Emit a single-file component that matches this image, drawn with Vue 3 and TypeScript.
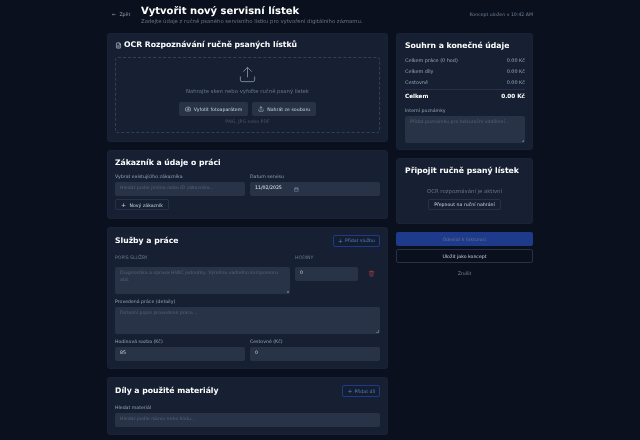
<template>
  <div class="page">
    <header class="page-header">
      <a class="back"><span class="arrow">←</span> Zpět</a>
      <div class="heading">
        <h1>Vytvořit nový servisní lístek</h1>
        <p>Zadejte údaje z ručně psaného servisního lístku pro vytvoření digitálního záznamu.</p>
      </div>
      <span class="saved">Koncept uložen v 10:42 AM</span>
    </header>

    <div class="layout">
      <main class="col">
        <section class="card ocr">
          <h2 class="ocr-title">
            <svg viewBox="0 0 24 24" class="doc"><path d="M14 3H6a1 1 0 0 0-1 1v16a1 1 0 0 0 1 1h12a1 1 0 0 0 1-1V8zM14 3v5h5M9 13h6M9 17h6" /></svg>
            OCR Rozpoznávání ručně psaných lístků
          </h2>
          <div class="dropzone">
            <svg viewBox="0 0 24 24" class="upload"><path d="M21 15v4a2 2 0 0 1-2 2H5a2 2 0 0 1-2-2v-4M17 8l-5-5-5 5M12 3v12" /></svg>
            <p class="drop-text">Nahrajte sken nebo vyfoťte ručně psaný lístek</p>
            <div class="drop-actions">
              <button class="btn-soft">
                <svg viewBox="0 0 24 24"><path d="M14.5 4h-5L7 7H4a2 2 0 0 0-2 2v9a2 2 0 0 0 2 2h16a2 2 0 0 0 2-2V9a2 2 0 0 0-2-2h-3z" /><circle cx="12" cy="13" r="3" /></svg>
                Vyfotit fotoaparátem
              </button>
              <button class="btn-soft">
                <svg viewBox="0 0 24 24"><path d="M21 15v4a2 2 0 0 1-2 2H5a2 2 0 0 1-2-2v-4M17 8l-5-5-5 5M12 3v12" /></svg>
                Nahrát ze souboru
              </button>
            </div>
            <p class="drop-note">PNG, JPG nebo PDF</p>
          </div>
        </section>

        <section class="card customer">
          <h2>Zákazník a údaje o práci</h2>
          <div class="two">
            <label class="field">
              <span>Vybrat existujícího zákazníka</span>
              <div class="input placeholder">Hledat podle jména nebo ID zákazníka...</div>
            </label>
            <label class="field">
              <span>Datum servisu</span>
              <div class="input date">
                11/02/2025
                <svg viewBox="0 0 24 24"><path d="M4 5h16v16H4zM4 10h16M8 3v4M16 3v4" /></svg>
              </div>
            </label>
          </div>
          <button class="btn-outline new-customer"><span class="plus">+</span> Nový zákazník</button>
        </section>

        <section class="card services">
          <div class="card-head">
            <h2>Služby a práce</h2>
            <button class="btn-add"><span class="plus">+</span> Přidat službu</button>
          </div>
          <div class="service-row">
            <div class="service-desc">
              <span class="caps">POPIS SLUŽBY</span>
              <div class="textarea placeholder">Diagnostika a oprava HVAC jednotky, Výměna vadného kompresoru atd.</div>
            </div>
            <div class="service-hours">
              <span class="caps">HODINY</span>
              <div class="input">0</div>
            </div>
            <svg viewBox="0 0 24 24" class="trash"><path d="M4 6h16M9 6V4h6v2M6 6l1 15h10l1-15zM10 10v8M14 10v8" /></svg>
          </div>
          <label class="field work">
            <span>Provedená práce (detaily)</span>
            <div class="textarea placeholder">Detailní popis provedené práce...</div>
          </label>
          <div class="two">
            <label class="field">
              <span>Hodinová sazba (Kč)</span>
              <div class="input">85</div>
            </label>
            <label class="field">
              <span>Cestovné (Kč)</span>
              <div class="input">0</div>
            </label>
          </div>
        </section>

        <section class="card parts">
          <div class="card-head">
            <h2>Díly a použité materiály</h2>
            <button class="btn-add"><span class="plus">+</span> Přidat díl</button>
          </div>
          <label class="field">
            <span>Hledat materiál</span>
            <div class="input placeholder">Hledat podle názvu nebo kódu...</div>
          </label>
        </section>
      </main>

      <aside class="col">
        <section class="card summary">
          <h2>Souhrn a konečné údaje</h2>
          <div v-for="row in rows" :key="row.label" class="sum-row">
            <span>{{ row.label }}</span>
            <span>{{ row.value }}</span>
          </div>
          <div class="sum-total">
            <span>Celkem</span>
            <span>0.00 Kč</span>
          </div>
          <label class="field">
            <span>Interní poznámky</span>
            <div class="textarea placeholder">Přidat poznámku pro fakturační oddělení...</div>
          </label>
        </section>

        <section class="card attach">
          <h2>Připojit ručně psaný lístek</h2>
          <p>OCR rozpoznávání je aktivní</p>
          <button class="btn-outline">Přepnout na ruční nahrání</button>
        </section>

        <div class="actions">
          <button class="btn-primary">Odeslat k fakturaci</button>
          <button class="btn-draft">Uložit jako koncept</button>
          <button class="btn-cancel">Zrušit</button>
        </div>
      </aside>
    </div>
  </div>
</template>

<script setup lang="ts">
interface SummaryRow {
  label: string;
  value: string;
}

const rows: SummaryRow[] = [
  { label: 'Celkem práce (0 hod)', value: '0.00 Kč' },
  { label: 'Celkem díly', value: '0.00 Kč' },
  { label: 'Cestovné', value: '0.00 Kč' },
];
</script>

<style>
html,
body {
  margin: 0;
  background: #0a101e;
  overflow: hidden;
}
</style>

<style scoped>
.page {
  width: 640px;
  height: 440px;
  box-sizing: border-box;
  padding: 0 107px;
  overflow: hidden;
  background: #0a101e;
  color: #e2e8f0;
  font-family: "DejaVu Sans", sans-serif;
  font-size: 4.67px;
  text-rendering: geometricPrecision;
  filter: blur(0.35px);
}

h1,
h2,
p {
  margin: 0;
}

svg {
  fill: none;
  stroke: currentColor;
  stroke-width: 2;
  stroke-linecap: round;
  stroke-linejoin: round;
}

button {
  font-family: inherit;
  cursor: pointer;
}

/* header */
.page-header {
  height: 30px;
  margin-bottom: 3px;
  display: flex;
  align-items: center;
  padding-left: 5px;
  box-sizing: border-box;
}

.back {
  width: 29px;
  font-size: 4.67px;
  color: #94a3b8;
}

.arrow {
  margin-right: 2px;
}

.heading {
  flex: 1;
  padding-top: 1px;
}

.heading h1 {
  font-size: 10px;
  line-height: 12px;
  font-weight: 700;
  color: #fff;
}

.heading p {
  font-size: 5.33px;
  line-height: 8px;
  color: #64748b;
}

.saved {
  font-size: 4.67px;
  color: #718096;
}

/* columns */
.layout {
  display: grid;
  grid-template-columns: 281px 137px;
  gap: 8px;
  align-items: start;
}

.col {
  display: flex;
  flex-direction: column;
  gap: 8px;
}

.card {
  box-sizing: border-box;
  background: #172033;
  border: 1px solid #1a2336;
  border-radius: 3px;
  padding: 7px;
}

.card h2 {
  font-size: 7.7px;
  line-height: 12px;
  font-weight: 700;
  color: #fff;
}

.card-head {
  display: flex;
  align-items: center;
  justify-content: space-between;
  height: 12px;
}

/* form bits */
.field {
  display: flex;
  flex-direction: column;
}

.field > span {
  font-size: 4.67px;
  line-height: 7px;
  margin-bottom: 1px;
  color: #94a3b8;
}

.caps {
  display: block;
  font-size: 4.67px;
  line-height: 7px;
  color: #64748b;
}

.input,
.textarea {
  box-sizing: border-box;
  background: #283347;
  border-radius: 2px;
  padding: 0 5px;
  font-size: 4.67px;
  color: #cbd5e1;
}

.input {
  height: 14px;
  line-height: 14px;
}

.textarea {
  position: relative;
  height: 27px;
  padding-top: 3px;
  line-height: 7px;
}

.textarea::after {
  content: "";
  position: absolute;
  right: 1px;
  bottom: 1px;
  width: 3px;
  height: 3px;
  background: linear-gradient(135deg, transparent 50%, #5d6778 50%);
}

.placeholder {
  color: #566176;
}

.two {
  display: grid;
  grid-template-columns: 1fr 1fr;
  gap: 5px;
}

.plus {
  margin-right: 2px;
  font-size: 6px;
  line-height: 1;
}

.btn-outline {
  height: 11px;
  padding: 0 5px;
  background: #172033;
  border: 1px solid #263246;
  border-radius: 2px;
  color: #cbd5e1;
  font-size: 4.67px;
}

.btn-add {
  height: 12px;
  padding: 0 4px;
  display: flex;
  align-items: center;
  background: #151e30;
  border: 1px solid #1e3a8a;
  border-radius: 2px;
  color: #4f7fc4;
  font-size: 4.67px;
}

/* ocr card */
.ocr {
  height: 109px;
  padding-top: 5px;
}

.ocr-title {
  display: flex;
  align-items: center;
  gap: 2px;
  margin-bottom: 6px;
}

.doc {
  width: 7px;
  height: 7px;
  color: #cbd5e1;
}

.dropzone {
  box-sizing: border-box;
  height: 76px;
  display: flex;
  flex-direction: column;
  align-items: center;
  border: 1px dashed #343f52;
  border-radius: 3px;
  padding-top: 7px;
}

.upload {
  width: 19px;
  height: 19px;
  color: #7b8798;
  stroke-width: 1.2;
}

.drop-text {
  margin-top: 4px;
  font-size: 5.33px;
  line-height: 8px;
  color: #64748b;
}

.drop-actions {
  display: flex;
  gap: 4px;
  margin-top: 6px;
}

.btn-soft {
  height: 14px;
  padding: 0 6px;
  display: flex;
  align-items: center;
  gap: 3px;
  background: #283347;
  border: 0;
  border-radius: 2px;
  color: #cbd5e1;
  font-size: 4.67px;
}

.btn-soft svg {
  width: 6px;
  height: 6px;
}

.drop-note {
  margin-top: 3px;
  font-size: 4.67px;
  line-height: 7px;
  color: #475366;
}

/* customer */
.customer {
  height: 69px;
  padding-top: 5.5px;
}

.customer h2 {
  margin-bottom: 5.5px;
}

.date {
  display: flex;
  align-items: center;
  gap: 12px;
  color: #e2e8f0;
}

.date svg {
  width: 5px;
  height: 5px;
  color: #94a3b8;
}

.new-customer {
  margin-top: 3px;
}

/* services */
.services {
  height: 142px;
  padding-top: 6.5px;
}

.service-row {
  display: flex;
  gap: 5px;
  margin-top: 8px;
}

.service-desc {
  width: 175px;
}

.service-desc .textarea {
  margin-top: 5px;
}

.service-hours {
  width: 63px;
}

.service-hours .input {
  margin-top: 5px;
}

.trash {
  width: 7px;
  height: 7px;
  margin: 15px 0 0 5px;
  color: #9f3a44;
}

.work {
  margin-top: 5.4px;
  margin-bottom: 5px;
}

/* parts */
.parts {
  height: 58px;
}

.parts .field {
  margin-top: 8px;
}

/* summary */
.summary {
  height: 117px;
  padding: 6px 7px 6px 8px;
}

.summary h2 {
  margin-bottom: 4px;
}

.sum-row {
  display: flex;
  justify-content: space-between;
  font-size: 4.9px;
  line-height: 11px;
  color: #94a3b8;
}

.sum-total {
  display: flex;
  justify-content: space-between;
  padding-top: 1.5px;
  margin-bottom: 5.3px;
  border-top: 1px solid #263246;
  font-size: 5.7px;
  line-height: 11px;
  font-weight: 700;
  color: #fff;
}

/* attach */
.attach {
  height: 66px;
  text-align: center;
  padding: 6px 8px;
}

.attach h2 {
  text-align: left;
}

.attach p {
  margin-top: 10.7px;
  margin-bottom: 3.3px;
  font-size: 5.33px;
  line-height: 8px;
  color: #64748b;
}

/* actions */
.actions {
  display: flex;
  flex-direction: column;
  gap: 3px;
}

.btn-primary,
.btn-draft,
.btn-cancel {
  height: 14px;
  border-radius: 2px;
  font-size: 4.67px;
}

.btn-primary {
  background: #1e3a8a;
  border: 0;
  color: #64748b;
}

.btn-draft {
  background: #0a101e;
  border: 1px solid #273244;
  color: #cbd5e1;
}

.btn-cancel {
  background: none;
  border: 0;
  color: #7c8798;
}
</style>
